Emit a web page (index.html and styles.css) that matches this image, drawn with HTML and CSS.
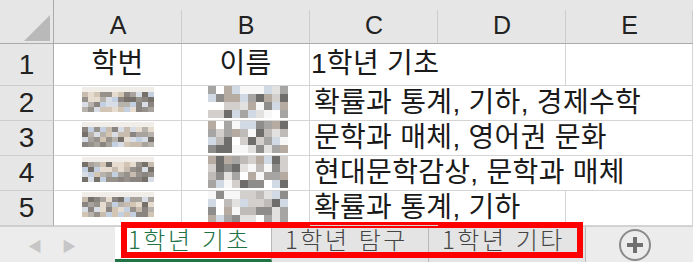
FILE: index.html
```html
<!DOCTYPE html>
<html lang="ko">
<head>
  <meta charset="UTF-8" />
  <title>1학년 기초</title>
  <link rel="stylesheet" href="styles.css">
</head>
<body>
  <div class="sheet">
    <div class="corner"><span class="tri"></span></div>
    <div class="col-head">A</div>
    <div class="col-head">B</div>
    <div class="col-head">C</div>
    <div class="col-head">D</div>
    <div class="col-head last">E</div>

    <div class="row-head">1</div>
    <div class="cell mid center">학번</div>
    <div class="cell mid center">이름</div>
    <div class="cell mid over">1학년 기초</div>
    <div class="cell"></div>
    <div class="cell"></div>

    <div class="row-head">2</div>
    <div class="cell center"><div class="mosaic id" data-seed="11"></div></div>
    <div class="cell center"><div class="mosaic name" data-seed="23"></div></div>
    <div class="cell over">확률과 통계, 기하, 경제수학</div>
    <div class="cell over"></div>
    <div class="cell"></div>

    <div class="row-head">3</div>
    <div class="cell center"><div class="mosaic id" data-seed="37"></div></div>
    <div class="cell center"><div class="mosaic name" data-seed="41"></div></div>
    <div class="cell over">문학과 매체, 영어권 문화</div>
    <div class="cell over"></div>
    <div class="cell"></div>

    <div class="row-head">4</div>
    <div class="cell center"><div class="mosaic id" data-seed="53"></div></div>
    <div class="cell center"><div class="mosaic name" data-seed="67"></div></div>
    <div class="cell over">현대문학감상, 문학과 매체</div>
    <div class="cell over"></div>
    <div class="cell"></div>

    <div class="row-head">5</div>
    <div class="cell center"><div class="mosaic id" data-seed="79"></div></div>
    <div class="cell center"><div class="mosaic name" data-seed="83"></div></div>
    <div class="cell over">확률과 통계, 기하</div>
    <div class="cell"></div>
    <div class="cell"></div>
  </div>

  <div class="tabbar">
    <div class="nav">
      <span class="arrow">◀</span>
      <span class="arrow">▶</span>
    </div>
    <div class="tabs">
      <div class="tab active">1학년 기초</div>
      <div class="tab">1학년 탐구</div>
      <div class="tab">1학년 기타</div>
      <div class="highlight"></div>
    </div>
    <div class="add-sheet">
      <svg width="34" height="34" viewBox="0 0 34 34">
        <circle cx="17" cy="17" r="15" fill="none" stroke="#8a8a8a" stroke-width="2"/>
        <path d="M17 9v16M9 17h16" stroke="#6f6f6f" stroke-width="4"/>
      </svg>
    </div>
  </div>

  <script>
    const palettes = {
      id: ['#76706b', '#a8a39d', '#d3c5b3', '#c3d0e2', '#97918b', '#e6dccf', '#b7b2ab', '#d9dde6', '#8a8580', '#c7bcae'],
      name: ['#8f8d8b', '#a7a5a3', '#bebbb8', '#d2cfcc', '#e3e1df', '#f7f7f7', '#d0d9e4', '#6f6d6b', '#b5aba1', '#ffffff']
    };

    document.querySelectorAll('.mosaic').forEach(box => {
      const kind = box.classList.contains('id') ? 'id' : 'name';
      const cols = kind === 'id' ? 12 : 10;
      const rows = kind === 'id' ? 5 : 4;
      let seed = Number(box.dataset.seed);
      for (let i = 0; i < cols * rows; i++) {
        seed = (seed * 9301 + 49297) % 233280;
        const pick = Math.floor(seed / 233280 * palettes[kind].length);
        const px = document.createElement('span');
        // the top row of each id mosaic is washed out
        px.style.background = i < cols && kind === 'id' ? '#f1eeea' : palettes[kind][pick];
        box.appendChild(px);
      }
    });
  </script>
</body>
</html>
```

FILE: styles.css
```css
body {
  margin: 0;
  width: 693px;
  height: 262px;
  overflow: hidden;
  background: #fff;
  font-family: 'Liberation Sans', 'Noto Sans CJK KR', sans-serif;
  color: #1a1a1a;
}

.sheet {
  display: grid;
  grid-template-columns: 54px 128px 128px 128px 128px 127px;
  grid-template-rows: 44px 42px 35px 35px 35px 35px;
  background: #fff;
}

.corner {
  background: #e6e6e6;
  border-right: 1px solid #ababab;
  border-bottom: 1px solid #ababab;
  position: relative;
}

.tri {
  position: absolute;
  right: 3px;
  bottom: 2px;
  width: 26px;
  height: 26px;
  background: #b9b9b9;
  clip-path: polygon(100% 0, 100% 100%, 0 100%);
}

.col-head {
  background: #e6e6e6;
  border-bottom: 1px solid #ababab;
  display: flex;
  align-items: flex-end;
  justify-content: center;
  padding-bottom: 3px;
  font-size: 25px;
  color: #222;
  position: relative;
}

.col-head::after {
  content: '';
  position: absolute;
  right: 0;
  top: 10px;
  bottom: 0;
  width: 1px;
  background: #cdcdcd;
}

.row-head {
  background: #e6e6e6;
  border-right: 1px solid #ababab;
  border-bottom: 1px solid #cdcdcd;
  display: flex;
  align-items: center;
  justify-content: center;
  font-size: 28px;
  color: #222;
}

.cell {
  border-right: 1px solid #d4d4d4;
  border-bottom: 1px solid #d4d4d4;
  display: flex;
  align-items: flex-end;
  padding: 0 0 1px 4px;
  font-size: 28px;
  letter-spacing: 0.3px;
  white-space: nowrap;
  line-height: 1.15;
}

.cell.mid {
  align-items: center;
  padding-left: 1px;
}

.cell.center {
  justify-content: center;
  padding-left: 0;
}

.cell.over {
  border-right: none;
  z-index: 1;
}

.mosaic {
  display: grid;
}

.mosaic.id {
  grid-template-columns: repeat(12, 6px);
  grid-auto-rows: 5px;
  margin-bottom: 7px;
}

.mosaic.name {
  grid-template-columns: repeat(10, 8px);
  grid-auto-rows: 8px;
  margin-bottom: 1px;
  margin-left: 4px;
}

.tabbar {
  height: 36px;
  background: #ececec;
  border-top: 1px solid #d0d0d0;
  box-sizing: border-box;
  display: flex;
  align-items: stretch;
}

.nav {
  width: 115px;
  display: flex;
  align-items: center;
  padding-left: 28px;
  gap: 20px;
  box-sizing: border-box;
}

.arrow {
  font-size: 14px;
  color: #c6c6c6;
}

.tabs {
  display: flex;
  position: relative;
}

.tab {
  width: 157px;
  box-sizing: border-box;
  padding: 0 0 11px 13px;
  display: flex;
  align-items: center;
  font-family: 'Noto Sans CJK KR', sans-serif;
  font-size: 24px;
  line-height: 1;
  font-weight: 300;
  letter-spacing: 2.5px;
  color: #444;
  background: #e4e4e4;
  border-right: 1px solid #b8b8b8;
}

.tab.active {
  background: #fff;
  color: #217346;
  border-bottom: 3px solid #217346;
  padding-bottom: 8px;
}

.highlight {
  position: absolute;
  left: 6px;
  top: -5px;
  width: 462px;
  height: 36px;
  border: 6px solid #ff0000;
  box-sizing: border-box;
}

.add-sheet {
  flex: 1;
  display: flex;
  align-items: center;
  justify-content: center;
  padding-right: 10px;
}
```
